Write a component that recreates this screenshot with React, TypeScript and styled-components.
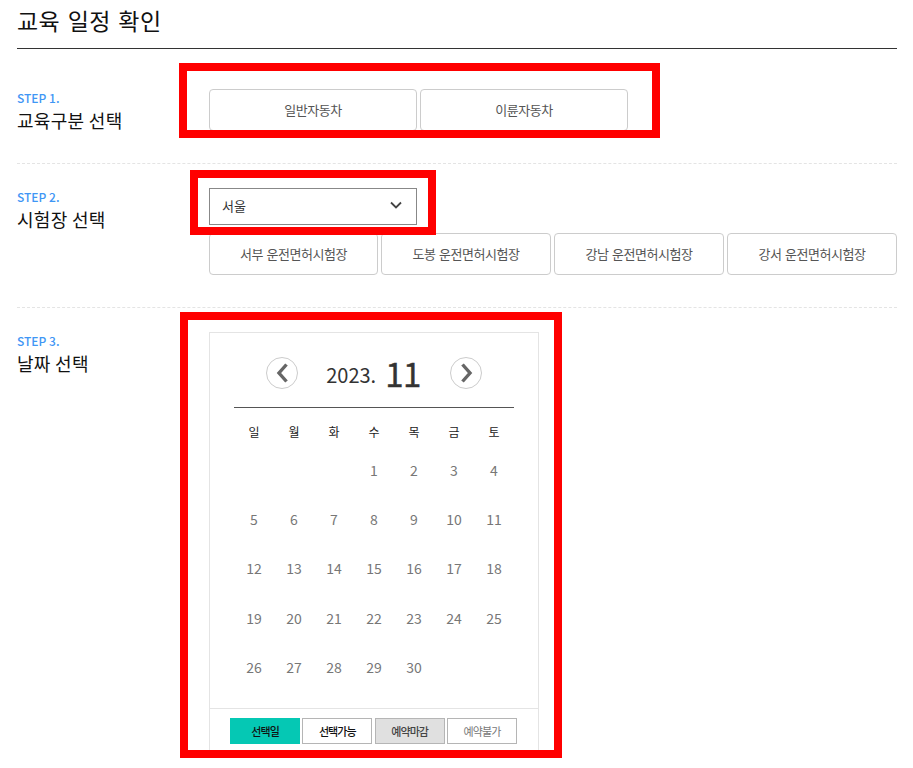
import React from 'react';
import styled, { createGlobalStyle } from 'styled-components';

const GlobalStyle = createGlobalStyle`
  html, body {
    margin: 0;
    padding: 0;
    background: #fff;
    height: 768px;
    overflow: hidden;
  }
  body, button {
    font-family: "Noto Sans CJK KR", "Noto Sans", sans-serif;
  }
  * {
    box-sizing: border-box;
  }
`;

const days: (number | null)[][] = [
  [null, null, null, 1, 2, 3, 4],
  [5, 6, 7, 8, 9, 10, 11],
  [12, 13, 14, 15, 16, 17, 18],
  [19, 20, 21, 22, 23, 24, 25],
  [26, 27, 28, 29, 30, null, null],
];

const weekNames = ['일', '월', '화', '수', '목', '금', '토'];
const centers = ['서부', '도봉', '강남', '강서'];

const Chevron = ({ flip }: { flip?: boolean }) => (
  <svg width="15" height="20" viewBox="0 0 15 20" fill="none">
    <path
      d={flip ? 'M3.5 1.5 L11 10 L3.5 18.5' : 'M11.5 1.5 L4 10 L11.5 18.5'}
      stroke="#666"
      strokeWidth="3.4"
    />
  </svg>
);

export default function App() {
  return (
    <Page>
      <GlobalStyle />
      <Title>교육 일정 확인</Title>

      <StepRow $height={115}>
        <StepLabel $top={40}>
          <StepNo>STEP 1.</StepNo>
          <StepName>교육구분 선택</StepName>
        </StepLabel>
        <StepBody $top={40}>
          <Highlight $top={-26} $left={-30} $width={481} $height={75} />
          <KindButtons>
            <OptionButton>일반자동차</OptionButton>
            <OptionButton>이륜자동차</OptionButton>
          </KindButtons>
        </StepBody>
      </StepRow>

      <StepRow $height={144}>
        <StepLabel $top={24}>
          <StepNo>STEP 2.</StepNo>
          <StepName>시험장 선택</StepName>
        </StepLabel>
        <StepBody $top={24}>
          <Highlight $top={-18} $left={-19} $width={246} $height={65} />
          <SelectBox>
            서울
            <svg width="14" height="9" viewBox="0 0 14 9" fill="none">
              <path d="M2 1.5 L7 6.5 L12 1.5" stroke="#444" strokeWidth="1.8" />
            </svg>
          </SelectBox>
          <CenterButtons>
            {centers.map((name) => (
              <OptionButton key={name}>{name} 운전면허시험장</OptionButton>
            ))}
          </CenterButtons>
        </StepBody>
      </StepRow>

      <LastRow>
        <StepLabel $top={24}>
          <StepNo>STEP 3.</StepNo>
          <StepName>날짜 선택</StepName>
        </StepLabel>
        <StepBody $top={24}>
          <Highlight $top={-20} $left={-29} $width={382} $height={446} />
          <Calendar>
            <CalendarHead>
              <NavButton>
                <Chevron />
              </NavButton>
              <MonthText>
                <YearText>2023.</YearText>
                <BigMonth>11</BigMonth>
              </MonthText>
              <NavButton>
                <Chevron flip />
              </NavButton>
            </CalendarHead>
            <DayTable>
              <WeekRow>
                {weekNames.map((w) => (
                  <WeekCell key={w}>{w}</WeekCell>
                ))}
              </WeekRow>
              {days.map((week, i) => (
                <DayRow key={i}>
                  {week.map((d, j) => (
                    <DayCell key={j}>{d}</DayCell>
                  ))}
                </DayRow>
              ))}
            </DayTable>
            <Legend>
              <LegendItem $kind="selected">선택일</LegendItem>
              <LegendItem $kind="open">선택가능</LegendItem>
              <LegendItem $kind="closed">예약마감</LegendItem>
              <LegendItem $kind="none">예약불가</LegendItem>
            </Legend>
          </Calendar>
        </StepBody>
      </LastRow>
    </Page>
  );
}

const Page = styled.div`
  width: 880px;
  margin-left: 17px;
  height: 768px;
  overflow: hidden;
`;

const Title = styled.h1`
  margin: 0;
  height: 49px;
  border-bottom: 1px solid #333;
  font-size: 23px;
  font-weight: 400;
  line-height: 41px;
  letter-spacing: 0.4px;
  word-spacing: 2px;
  color: #111;
`;

const StepRow = styled.section<{ $height: number }>`
  display: flex;
  height: ${(p) => p.$height}px;
  border-bottom: 1px dashed #e4e4e4;
`;

const LastRow = styled.section`
  display: flex;
`;

const StepLabel = styled.div<{ $top: number }>`
  width: 192px;
  flex: none;
  padding-top: ${(p) => p.$top}px;
`;

const StepNo = styled.div`
  font-size: 12px;
  font-weight: 500;
  line-height: 18px;
  color: #3f96f5;
`;

const StepName = styled.div`
  font-size: 18px;
  line-height: 26px;
  letter-spacing: 0.3px;
  color: #111;
`;

const StepBody = styled.div<{ $top: number }>`
  position: relative;
  flex: 1;
  margin-top: ${(p) => p.$top}px;
`;

const Highlight = styled.div<{
  $top: number;
  $left: number;
  $width: number;
  $height: number;
}>`
  position: absolute;
  z-index: 2;
  top: ${(p) => p.$top}px;
  left: ${(p) => p.$left}px;
  width: ${(p) => p.$width}px;
  height: ${(p) => p.$height}px;
  border: 8px solid #f00;
  pointer-events: none;
`;

const KindButtons = styled.div`
  display: flex;
  gap: 3px;
`;

const OptionButton = styled.button`
  height: 42px;
  min-width: 0;
  flex: 0 0 208px;
  padding: 0 0 2px;
  border: 1px solid #ccc;
  border-radius: 4px;
  background: #fff;
  font-size: 13px;
  letter-spacing: -0.45px;
  word-spacing: 1px;
  color: #555;
`;

const SelectBox = styled.div`
  display: flex;
  align-items: center;
  justify-content: space-between;
  width: 208px;
  height: 37px;
  padding: 0 13px 2px 12px;
  border: 1px solid #888;
  font-size: 13px;
  color: #333;
`;

const CenterButtons = styled.div`
  display: grid;
  grid-template-columns: 169px 170px 170px 170px;
  gap: 3px;
  margin-top: 8px;
`;

const Calendar = styled.div`
  width: 330px;
  height: 422px;
  overflow: hidden;
  border: 1px solid #e4e4e4;
`;

const CalendarHead = styled.div`
  display: flex;
  align-items: center;
  justify-content: center;
  width: 280px;
  height: 75px;
  margin: 0 auto;
  padding-top: 6px;
  border-bottom: 1px solid #555;
`;

const NavButton = styled.button`
  display: flex;
  align-items: center;
  justify-content: center;
  width: 32px;
  height: 32px;
  padding: 0;
  border: 1px solid #ccc;
  border-radius: 50%;
  background: #fff;
`;

const MonthText = styled.div`
  display: flex;
  align-items: center;
  justify-content: center;
  gap: 9px;
  width: 152px;
  padding-right: 1px;
  color: #333;
`;

const YearText = styled.span`
  font-size: 20px;
  line-height: 26px;
  margin-top: 4px;
`;

const BigMonth = styled.span`
  font-size: 33px;
  line-height: 40px;
  letter-spacing: -0.5px;
  -webkit-text-stroke: 0.4px #333;
`;

const DayTable = styled.div`
  width: 280px;
  margin: 0 auto;
`;

const WeekRow = styled.div`
  display: grid;
  grid-template-columns: repeat(7, 40px);
  height: 37.5px;
  padding-top: 15px;
  align-items: start;
`;

const WeekCell = styled.div`
  font-size: 12px;
  line-height: 18px;
  text-align: center;
  color: #222;
`;

const DayRow = styled.div`
  display: grid;
  grid-template-columns: repeat(7, 40px);
  height: 49.2px;
  align-items: center;
`;

const DayCell = styled.div`
  font-size: 14px;
  text-align: center;
  color: #777;
`;

const legendColors = {
  selected: 'background: #05c8b4; border-color: #05c8b4; color: #111; font-weight: 500;',
  open: 'background: #fff; border-color: #b5b5b5; color: #111; font-weight: 500;',
  closed: 'background: #e0e0e0; border-color: #b5b5b5; color: #444; font-weight: 500;',
  none: 'background: #fff; border-color: #b5b5b5; color: #777;',
};

const Legend = styled.div`
  display: flex;
  justify-content: center;
  gap: 2.3px;
  height: 60px;
  margin-top: 16.5px;
  padding: 9px 1px 0 0;
  border-top: 1px solid #e4e4e4;
`;

const LegendItem = styled.div<{ $kind: keyof typeof legendColors }>`
  width: 70px;
  height: 26px;
  border: 1px solid;
  font-size: 11px;
  line-height: 24px;
  letter-spacing: -0.9px;
  text-align: center;
  ${(p) => legendColors[p.$kind]}
`;
